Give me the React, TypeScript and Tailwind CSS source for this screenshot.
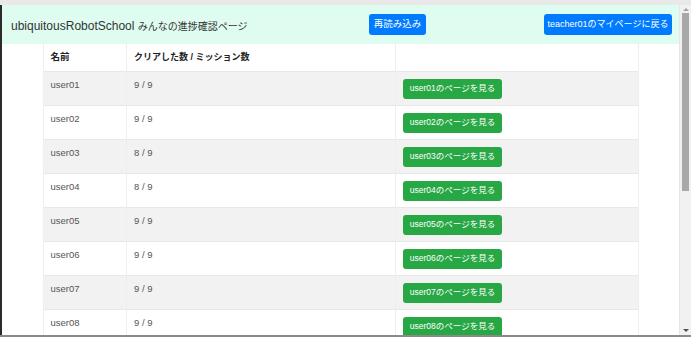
import React from 'react';

const users = [
  { name: 'user01', cleared: 9, total: 9 },
  { name: 'user02', cleared: 9, total: 9 },
  { name: 'user03', cleared: 8, total: 9 },
  { name: 'user04', cleared: 8, total: 9 },
  { name: 'user05', cleared: 9, total: 9 },
  { name: 'user06', cleared: 9, total: 9 },
  { name: 'user07', cleared: 9, total: 9 },
  { name: 'user08', cleared: 9, total: 9 },
];

const font = { fontFamily: '"Liberation Sans", "Noto Sans CJK JP", sans-serif' };

const Scrollbar: React.FC = () => (
  <div className="flex w-[12px] flex-col bg-[#f1f1f1] border-l border-[#e6e6e6]">
    <div className="flex h-[8px] items-center justify-center">
      <div className="h-0 w-0 border-x-[3px] border-b-[3px] border-x-transparent border-b-[#a3a3a3]" />
    </div>
    <div className="mx-[2px] h-[178px] bg-[#a8a8a8]" />
    <div className="flex-1" />
    <div className="flex h-[10px] items-center justify-center">
      <div className="h-0 w-0 border-x-[3px] border-t-[3px] border-x-transparent border-t-[#505050]" />
    </div>
  </div>
);

export default function App() {
  return (
    <div className="flex h-[337px] w-[691px] flex-col overflow-hidden bg-white" style={font}>
      <div className="h-[5px] bg-[#e9e9e9]" />
      <div className="flex min-h-0 flex-1">
        <div className="w-[2px] bg-[#2b2b2b]" />
        <div className="flex min-w-0 flex-1 flex-col overflow-hidden">
          <div className="flex h-[39px] shrink-0 items-center bg-[#dffcf0] pl-[9px] pr-[7px]">
            <div className="w-[358px] whitespace-nowrap text-[#333]">
              <span className="text-[12px]">ubiquitousRobotSchool </span>
              <span className="text-[10px]">みんなの進捗確認ページ</span>
            </div>
            <button className="h-[21px] w-[57px] whitespace-nowrap rounded-[3px] bg-[#007bff] text-[9.5px] text-white">
              再読み込み
            </button>
            <button className="ml-auto h-[21px] w-[128px] whitespace-nowrap rounded-[3px] bg-[#007bff] text-[9px] text-white">
              teacher01のマイページに戻る
            </button>
          </div>
          <div className="mx-auto w-[596px] border-x border-[#eceeef]">
            <table className="w-full border-collapse text-[9.5px] text-[#555]">
              <thead>
                <tr className="h-[27px] border-b border-[#e6e8ea]">
                  <th className="w-[83px] border-r border-[#eceeef] px-[7px] text-left font-bold text-[#222]">名前</th>
                  <th className="w-[269px] border-r border-[#eceeef] px-[7px] text-left text-[9px] font-bold text-[#222]">
                    クリアした数 / ミッション数
                  </th>
                  <th />
                </tr>
              </thead>
              <tbody>
                {users.map((u, i) => (
                  <tr
                    key={u.name}
                    className={`h-[34px] border-b border-[#e6e8ea] ${i % 2 === 0 ? 'bg-[#f2f2f2]' : 'bg-white'}`}
                  >
                    <td className="border-r border-[#eceeef] px-[7px] pt-[6px] align-top">{u.name}</td>
                    <td className="border-r border-[#eceeef] px-[7px] pt-[6px] align-top">
                      {u.cleared} / {u.total}
                    </td>
                    <td className="px-[7px] pt-[7px] align-top">
                      <button className="h-[20px] w-[99px] whitespace-nowrap rounded-[3px] bg-[#28a745] text-[8.5px] text-white">
                        {u.name}のページを見る
                      </button>
                    </td>
                  </tr>
                ))}
              </tbody>
            </table>
          </div>
        </div>
        <Scrollbar />
      </div>
      <div className="h-[2px] bg-[#8a8a8a]" />
    </div>
  );
}
